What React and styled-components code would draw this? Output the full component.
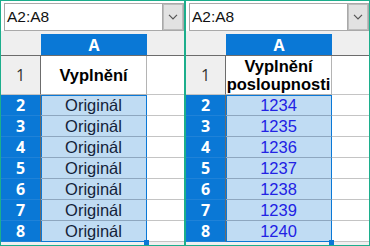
import React from 'react'
import styled, { createGlobalStyle } from 'styled-components'

const GlobalStyle = createGlobalStyle`
  html, body { margin: 0; padding: 0; background: #fff; }
  * { box-sizing: border-box; }
`

const TEAL = '#1cae8c'
const BLUE = '#0a78d6'

const Screen = styled.div`
  display: flex;
  width: 370px;
  height: 246px;
`

const Panel = styled.div`
  width: 185px;
  height: 246px;
  border: 1px solid ${TEAL};
  display: flex;
  flex-direction: column;
  background: #fff;
`

const Toolbar = styled.div`
  height: 30px;
  padding: 2px 0 0 3px;
  display: flex;
  background: #fff;
`

const NameBox = styled.div`
  flex: 1;
  height: 28px;
  display: flex;
  border: 1px solid #a9a9a9;
  background: #fff;
`

const NameText = styled.div`
  flex: 1;
  padding-left: 2px;
  display: flex;
  align-items: center;
  font-family: 'Liberation Sans', Arial, sans-serif;
  font-size: 15.5px;
  color: #111;
`

const DropButton = styled.div`
  width: 21px;
  display: flex;
  align-items: center;
  justify-content: center;
  background: #e2e2e2;
  border-left: 1px solid #a9a9a9;
  box-shadow: inset 0 0 0 1px #bdbdbd;
`

const Sheet = styled.div`
  flex: 1;
  display: flex;
  flex-direction: column;
  background: #f0f0f0;
`

const HeaderRow = styled.div`
  display: flex;
  padding-top: 3px;
  border-bottom: 1px solid #6c6c6c;
  background: #efefef;
`

const Corner = styled.div`
  width: 40px;
  height: 21px;
`

const ColHead = styled.div`
  width: 106px;
  height: 21px;
  display: flex;
  align-items: center;
  justify-content: center;
  background: ${BLUE};
  color: #fff;
  font-family: 'Open Sans', sans-serif;
  font-weight: 700;
  font-size: 16px;
`

const Filler = styled.div`
  flex: 1;
`

const Row = styled.div`
  display: flex;
  height: ${p => p.$h}px;
`

const RowHead = styled.div`
  width: 40px;
  display: flex;
  align-items: center;
  justify-content: center;
  border-right: 1px solid #6c6c6c;
  border-bottom: 1px solid ${p => (p.$active ? '#1f82d8' : '#c4c4c4')};
  background: ${p => (p.$active ? BLUE : '#efefef')};
  color: ${p => (p.$active ? '#fff' : '#333')};
  font-family: 'Open Sans', sans-serif;
  font-weight: ${p => (p.$active ? 700 : 400)};
  font-size: 16px;
`

const Cell = styled.div`
  position: relative;
  width: 106px;
  display: flex;
  align-items: center;
  justify-content: center;
  text-align: center;
  font-family: 'Liberation Sans', Arial, sans-serif;
  font-size: 16.5px;
  color: ${p => p.$color || '#14233a'};
  background: ${p => (p.$selected ? '#c0dcf3' : '#fff')};
  border-right: 1px solid ${p => (p.$selected ? BLUE : '#b4b4b4')};
  border-bottom: 1px solid ${p => (p.$last ? BLUE : p.$selected ? '#8ea7bf' : '#b4b4b4')};
  box-shadow: ${p =>
    p.$selected
      ? `inset 1px 0 0 ${BLUE}${p.$first ? `, inset 0 1px 0 ${BLUE}` : ''}`
      : 'none'};
`

const HeadText = styled.div`
  font-family: 'Liberation Sans', Arial, sans-serif;
  font-weight: 700;
  font-size: 16.5px;
  line-height: 18px;
  color: #000;
`

const EmptyCell = styled.div`
  flex: 1;
  background: #fff;
  border-bottom: 1px solid #c4c4c4;
`

const FillHandle = styled.span`
  position: absolute;
  right: -3px;
  bottom: -4px;
  width: 5px;
  height: 5px;
  background: ${BLUE};
`

const Chevron = () => (
  <svg width="10" height="6" viewBox="0 0 10 6">
    <path d="M1 0.8 L5 4.8 L9 0.8" fill="none" stroke="#555" strokeWidth="1.2" />
  </svg>
)

function SheetPanel({ header, values, valueColor }) {
  return (
    <Panel>
      <Toolbar>
        <NameBox>
          <NameText>A2:A8</NameText>
          <DropButton><Chevron /></DropButton>
        </NameBox>
      </Toolbar>
      <Sheet>
        <HeaderRow>
          <Corner />
          <ColHead>A</ColHead>
          <Filler />
        </HeaderRow>
        <Row $h={39}>
          <RowHead>1</RowHead>
          <Cell><HeadText>{header}</HeadText></Cell>
          <EmptyCell />
        </Row>
        {values.map((v, i) => (
          <Row $h={21} key={i}>
            <RowHead $active>{i + 2}</RowHead>
            <Cell
              $selected
              $first={i === 0}
              $last={i === values.length - 1}
              $color={valueColor}
            >
              {v}
              {i === values.length - 1 && <FillHandle />}
            </Cell>
            <EmptyCell />
          </Row>
        ))}
      </Sheet>
    </Panel>
  )
}

export default function App() {
  const originals = Array(7).fill('Originál')
  const numbers = ['1234', '1235', '1236', '1237', '1238', '1239', '1240']
  return (
    <>
      <GlobalStyle />
      <Screen>
        <SheetPanel header="Vyplnění" values={originals} />
        <SheetPanel
          header={<>Vyplnění<br />posloupnosti</>}
          values={numbers}
          valueColor="#2222e4"
        />
      </Screen>
    </>
  )
}
